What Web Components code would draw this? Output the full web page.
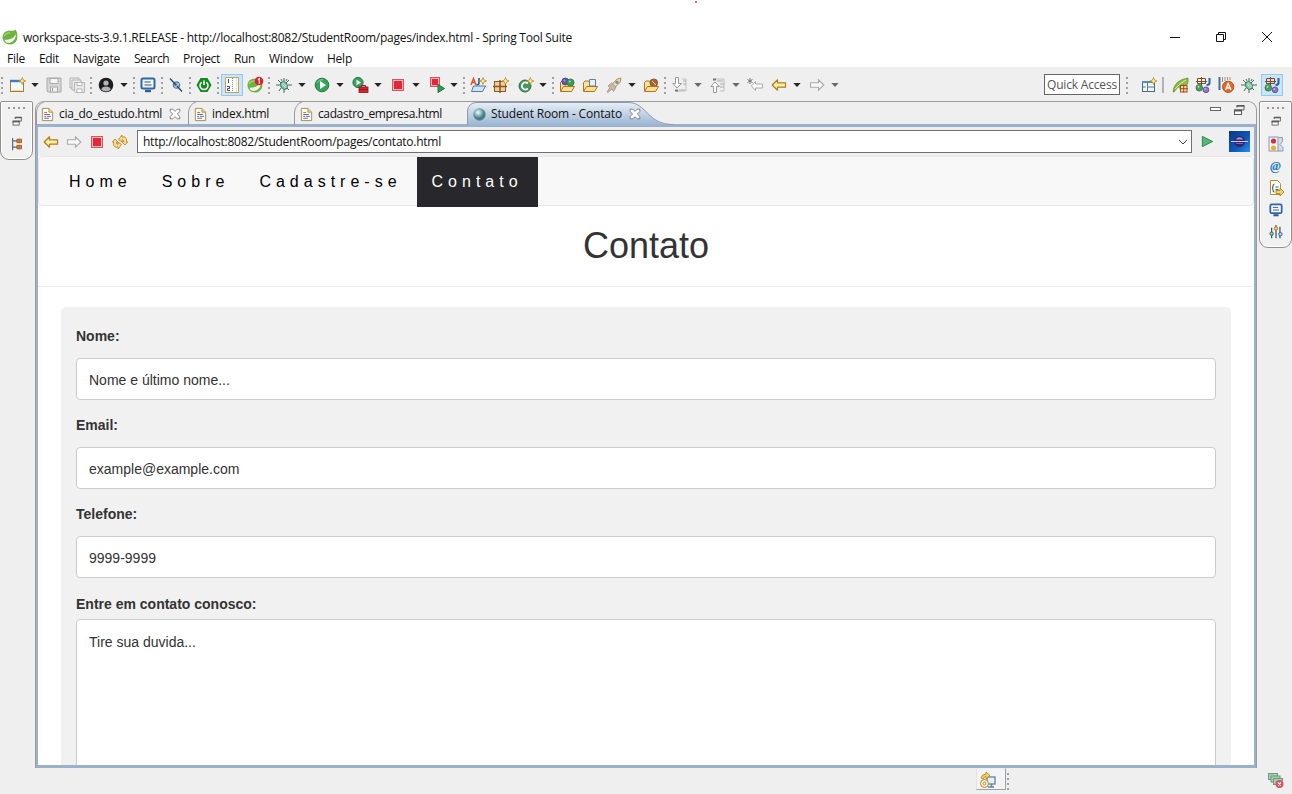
<!DOCTYPE html>
<html lang="pt-BR">
<head>
<meta charset="utf-8">
<title>Spring Tool Suite</title>
<style>
html,body{margin:0;height:100%;overflow:hidden;background:#efefef}
</style>
</head>
<body>
<sts-window></sts-window>
<script>
const define = (name, html, init) => customElements.define(name, class extends HTMLElement {
  connectedCallback() {
    if (this.shadowRoot) return;
    const root = this.attachShadow({mode: 'open'});
    const t = document.createElement('template');
    t.innerHTML = typeof html === 'function' ? html(this) : html;
    root.append(document.importNode(t.content, true));
    if (init) init(this, root);
  }
});

const bug = '<g stroke="#3b6b5c" fill="none"><path d="M2 3l3 3M8 1v4M13 3l-3 3M0 8h4M12 8h4M3 14l2-3M8 12v4M13 13l-3-3M5 2l1 2M11 2l-1 2"/></g><ellipse cx="8" cy="8.500" rx="3.200" ry="4" transform="rotate(-35 8 8.500)" fill="#8ec5a9" stroke="#34745e"/><path d="M6 7l4 4M7 5.500l4 4" stroke="#d8f1e3" stroke-width=".7"/>';
const doc = '<path d="M2.500 1.500h7l4 4v9h-11z" fill="#fffdf2" stroke="#a58d52"/><path d="M9.500 1.500v4h4" fill="#f2d58a" stroke="#a58d52"/><path d="M4.500 6h3M4.500 10h2" stroke="#d04848"/><path d="M4.500 8h6M7.500 10h4M4.500 12h5" stroke="#4a68b0"/>';
const back = (f, s) => `<path d="M1.200 8l5.300-5.200v3h8v4.400h-8v3z" fill="${f}" stroke="${s}" stroke-width="1.200" stroke-linejoin="round"/>`;
const fwd = '<path d="M14.800 8L9.500 2.800v3h-8v4.400h8v3z" fill="#f8f8f8" stroke="#aaa" stroke-width="1.100"/>';
const star = (x, y) => `<path d="M${x} ${y-3.5}l1 2.500 2.500 1-2.500 1-1 2.500-1-2.500-2.500-1 2.500-1z" fill="#ffe9a0" stroke="#bd8a22" stroke-width=".8"/>`;
/* Open folder with an object lying between its back and its front flap. */
const folder = inner => '<path d="M1.500 14V5.500L3 4h3.500l1 1.500h6V9" fill="#fbe0a0" stroke="#ad7624"/>' + inner + '<path d="M1.500 14.500l3-5h11l-3 5z" fill="#ffdf8f" stroke="#ad7624" stroke-linejoin="round"/>';
const monitor = '<rect x="1.500" y="1.500" width="13" height="10" rx="1.500" fill="#f4f9ff" stroke="#2f66a6" stroke-width="2"/><path d="M4.500 5h6M4.500 8h7" stroke="#2f4f80"/><path d="M5 14h6" stroke="#2f5b95" stroke-width="2.400"/>';
const jee = '<g fill="none" stroke="#7c4a22"><path d="M2.500 1.500h8v5h-8zM6.500 0v8M1 4.500h11"/></g><path d="M14.500 1v5q0 2-3 2" fill="none" stroke="#275fa8" stroke-width="2"/><circle cx="4.300" cy="10.800" r="3.300" fill="#49a05c" stroke="#2b6d44" stroke-width=".8"/><circle cx="11" cy="12.800" r="2.900" fill="#8c76c2" stroke="#584590" stroke-width=".8"/><circle cx="3.500" cy="9.800" r="1" fill="#b3e0b5"/><circle cx="10.200" cy="12" r=".8" fill="#d2c7ee"/>';
const spring = '<path d="M13.800 .5C17.500 9 14.500 15.500 8 15.500 3.500 15.500.5 12 .5 8.500.5 4 4 1.500 8 1.800c2.500.2 4.500 0 5.800-1.300z" fill="#6db33f"/><path d="M2.500 10.800c5.500.2 9.300-1.500 11.300-5.800.2 5-3 9-8 8.800-1.500-.2-2.800-1.200-3.300-3z" fill="#fff"/><path d="M2.200 7Q4 3.600 8 3.800" fill="none" stroke="#a5d67d" stroke-width="1.200"/>';
const restore = '<path d="M6 4.500v-2h7v4.500h-3" fill="none" stroke="#5c5c5c"/><path d="M5.500 3h8" stroke="#5c5c5c" stroke-width="1.500"/><rect x="3.500" y="7" width="7" height="4.500" fill="#fff" stroke="#5c5c5c"/><path d="M3 7.500h8" stroke="#5c5c5c" stroke-width="2"/>';
const icons = {
  caret: '<path d="M4.300 6h7.400L8 10z" fill="#252525"/>',
  caretoff: '<path d="M4.300 6h7.400L8 10z" fill="#6a6a6a"/>',
  sep: '<path d="M8 0v2M8 5v2M8 10v2M8 15v2" stroke="#8d8d8d" stroke-width="1.600"/>',
  line: '<path d="M8 0v16" stroke="#777"/>',
  fresh: '<rect x=".5" y="3.500" width="13" height="11" fill="#f1f8fd" stroke="#ab7b2c"/><path d="M0 4h11" stroke="#3f7cbb" stroke-width="2.400"/><path d="M2 13.500h10" stroke="#f4d98d"/>' + star(12.3, 4),
  save: '<path d="M1 1h14v14H2l-1-1z" fill="#d6d6d6" stroke="#aaa"/><rect x="4" y="1.500" width="8" height="5" fill="#f6f6f6" stroke="#aaa"/><rect x="4.500" y="10" width="7" height="5" fill="#f1f1f1" stroke="#aaa"/><path d="M6.500 11v3" stroke="#999"/>',
  saveall: '<g fill="#e9e9e9" stroke="#b5b5b5"><path d="M1 1h9v10H1z"/><path d="M3 3h9v10H3z"/><path d="M5.500 5.500h10v10h-9l-1-1z"/><path d="M8 5.500h5v3H8zM8 12h5v3.500H8z" fill="#fff"/></g>',
  user: '<circle cx="8" cy="8" r="7.300" fill="#1d1d1f"/><circle cx="8" cy="6" r="2.600" fill="#b4b4b8"/><path d="M3.200 12.600q.8-3 4.800-3t4.800 3q-2 2-4.800 2t-4.800-2z" fill="#b4b4b8"/>',
  monitor,
  skip: '<circle cx="8.500" cy="8" r="3.300" fill="#8ab1cf" stroke="#3e6e98"/><path d="M2 1.500l12 13" stroke="#294873" stroke-width="1.400"/><path d="M7 10.500l4-4" stroke="#d6e7f5"/>',
  power: '<path d="M4.500 1h7L15.500 8l-4 7h-7L.5 8z" fill="#148a22"/><path d="M5.600 5.300a4 4 0 1 0 4.800 0M8 3.500V8" fill="none" stroke="#fff" stroke-width="1.500"/>',
  ruler: '<rect x="1.500" y=".5" width="13" height="15" fill="#fffef8" stroke="#c2a362"/><path d="M8.500 1v14" stroke="#888" stroke-dasharray="1 1"/><path d="M4.500 2v4M3 9.500h2.500v2H3.500v2h2.500" fill="none" stroke="#37517b"/><path d="M12.500 1v14" stroke="#efe5c2"/>',
  spring1: spring + '<circle cx="12" cy="4" r="4.300" fill="#e11f2b"/><path d="M11 2.800l1.300-1v5" fill="none" stroke="#fff" stroke-width="1.200"/>',
  spring, bug,
  run: '<circle cx="8" cy="8" r="6.800" fill="#36a35a" stroke="#227943"/><path d="M3 6Q5 2 9 2.600" stroke="#91d2a4" fill="none"/><path d="M6 4l6 4-6 4z" fill="#fff"/>',
  runbox: '<circle cx="6" cy="5.500" r="5.100" fill="#36a35a" stroke="#227943"/><path d="M4.500 2.800l4.500 2.700-4.500 2.700z" fill="#fff"/><rect x="7" y="10" width="9" height="5.500" fill="#d5242c" stroke="#86191c" stroke-width=".8"/><path d="M9.500 10V8.500h4V10M7 12.500h9" fill="none" stroke="#941a1e"/>',
  stop: '<rect x="2.500" y="2.500" width="11" height="11" fill="#f6b6b6" stroke="#ce5961"/><rect x="4" y="4" width="8" height="8" fill="#e5253a"/>',
  stoprun: '<rect x="1.500" y=".5" width="9" height="9" fill="#f3abab" stroke="#ce5961"/><rect x="3" y="2" width="6" height="6" fill="#e5253a"/><path d="M9 7.500l6.500 4-6.500 4z" fill="#2d9c5a" stroke="#1e7441"/>',
  aj: '<path d="M1 8L3.500 1.500 6 8M2 5.500h3" fill="none" stroke="#db5225" stroke-width="1.400"/><path d="M9 1v5q0 2-2.500 1.500" fill="none" stroke="#2b5799" stroke-width="1.600"/>' + star(13, 4) + '<path d="M1.500 14.500l2-5.500h12l-3 5.500z" fill="#cee4f5" stroke="#507ba8"/>',
  grid: '<rect x="1.500" y="4.500" width="11" height="10" fill="#efcf9e" stroke="#8b5824"/><path d="M7 3v13M0 9.500h14" stroke="#8b5824" stroke-width="1.500"/>' + star(12.5, 4),
  cnew: '<circle cx="7" cy="9" r="6" fill="#43985b" stroke="#297444"/><path d="M9.800 6.500a3.500 3.500 0 1 0 0 5" fill="none" stroke="#fff" stroke-width="1.800"/>' + star(12.3, 4),
  folderballs: folder('<circle cx="6.300" cy="4.500" r="3.500" fill="#5b58a8" stroke="#3c3a82" stroke-width=".7"/><circle cx="11.500" cy="5.500" r="3.600" fill="#3f9b5b" stroke="#287243" stroke-width=".7"/><circle cx="5.500" cy="3.500" r="1" fill="#a5a2dc"/><circle cx="10.700" cy="4.500" r="1" fill="#a2dab0"/>'),
  folderdoc: folder('<path d="M7.500 9V2.500h6V9z" fill="#e7f0fa" stroke="#5f80a8"/>'),
  rocket: '<path d="M5.500 8L11 2l4-1-.8 4L8.500 11z" fill="#f9dfa4" stroke="#b08e55"/><path d="M2 9l3.500-3L10 10l-2.500 4.500L6 12l-4 3.500L1 15l3-4.500z" fill="#cbb7a8" stroke="#9a8679" stroke-width=".7"/><circle cx="11" cy="5.200" r="1.700" fill="#6b92c2"/>',
  folderbrush: folder('<circle cx="10.800" cy="5.800" r="3.900" fill="#a96538" stroke="#754320" stroke-width=".7"/><path d="M9 4l4 4" stroke="#eed199"/>'),
  downdoc: '<path d="M10 2h4v12H4" fill="none" stroke="#c0c0c0"/><path d="M11 4h3M11 7h3M7 13h6" stroke="#aaa"/><path d="M3.500.5h3v6h3L5 11 .8 6.500h2.700z" fill="#fff" stroke="#999"/><path d="M3 13.500h3" stroke="#777" stroke-width="2"/>',
  updoc: '<path d="M5 2h9v12h-4" fill="none" stroke="#c0c0c0"/><path d="M7 4h6M10 7h4M10 10h4" stroke="#aaa"/><path d="M3.500 15.500h3v-6h3L5 5 .8 9.500h2.700z" fill="#fff" stroke="#999"/><path d="M3 2.500h3" stroke="#777" stroke-width="2"/>',
  backstar: '<path d="M4.500 9l4-4.500v2.500h7v4h-7v2.500z" fill="#fff" stroke="#aaa"/><path d="M3 1v6M.5 2.500l5 3M5.500 2.500l-5 3" stroke="#777"/>',
  back: back('#fff0a8', '#b27b18'), fwd,
  persp: '<rect x="1.500" y="4.500" width="12" height="10" fill="#e9f4fb" stroke="#3f6f8b"/><path d="M1 5h13" stroke="#5390ba" stroke-width="2"/><path d="M6.500 5v10M6.500 10h7M1.500 10h3" stroke="#5f7d70"/>' + star(12.5, 4),
  leaf: '<path d="M0 15Q1 3 15 1q1 7-4 9-3 1-6 0l-4 5z" fill="#8fbc42" stroke="#5f8526" stroke-width=".7"/><path d="M2 12Q7 6 13 3" stroke="#dcefa9" fill="none"/><rect x="7.500" y="8.500" width="6.500" height="6.500" fill="#f6d99e" stroke="#9b4f1d"/><path d="M10.700 7.500v8M6.500 11.700h8.500" stroke="#9b4f1d"/>',
  jee,
  aop: '<path d="M1.500 0v13" stroke="#446e98" stroke-width="2"/><path d="M4.500 0v5M7 0v4M9.500 0v3M12 0v3" stroke="#aa8c84"/><circle cx="10.200" cy="9.800" r="5.600" fill="#e36b25" stroke="#b64a15"/><path d="M7.500 13l2.700-6.500L13 13M8.500 11h3.500" fill="none" stroke="#fff" stroke-width="1.300"/>',
  doc, restore,
  globe: '<defs><radialGradient id="g" cx=".38" cy=".32"><stop stop-color="#f6fafa"/><stop offset=".45" stop-color="#a5c6cb"/><stop offset="1" stop-color="#437e84"/></radialGradient></defs><circle cx="8" cy="8" r="6.300" fill="url(#g)" stroke="#6a93a5" stroke-width=".6"/>',
  close: '<path d="M2.500 2.500h3L8 5l2.500-2.500h3v2.700L10.700 8l2.800 2.800v2.700h-3L8 11l-2.500 2.500h-3v-2.700L5.300 8 2.500 5.200z" fill="#fff" stroke="#6b6b6b" stroke-width=".9"/>',
  refresh: '<g fill="#fbdc8c" stroke="#bd852a" stroke-width=".9" stroke-linejoin="round"><path d="M6.500 5.500L10 1v2q4.500-1 4.500 3.500v1.500h1.200L13 11l-3-3h1.500V7q0-1.500-1.500-1.200V8z"/><path d="M9.500 10.500L6 15v-2q-4.500 1-4.500-3.500V8H.3L3 5l3 3H4.500v1q0 1.500 1.500 1.200V8z"/></g>',
  play: '<path d="M2.500 2.500l11 5.500-11 5.500z" fill="#55b776" stroke="#2d864c" stroke-linejoin="round"/>',
  hier: '<path d="M3 1v14M3 4.500h5M3 11.500h5" fill="none" stroke="#55657a" stroke-width="1.300"/><g fill="#efbf80" stroke="#a55518"><rect x="8" y="2.500" width="5" height="4"/><rect x="8" y="9.500" width="5" height="4"/><path d="M10.500 2v5M10.500 9v5M7.500 4.500h6M7.500 11.500h6"/></g>',
  outline: '<path d="M10.500 1.500h4v4l-2.500 3 3 3v3.500h-5" fill="#d3dde9" stroke="#8a9ab8"/><rect x="1" y="1" width="9" height="14" fill="#eef4fb" stroke="#8298be"/><circle cx="5.500" cy="5" r="2.600" fill="#d63038"/><circle cx="5.500" cy="12" r="2.600" fill="#ecb027"/>',
  snip: '<path d="M2.500.5h7l3 3v11h-10z" fill="#fffdf0" stroke="#b58d36"/><path d="M6.500 4Q5 4 5 6T4 8q1 0 1 2t1.500 2M7.500 7h3M7.500 9.500h3" stroke="#35609b" fill="none" stroke-width="1.200"/><path d="M8 10.500h4V8l4 4-4 4v-2.500H8z" fill="#f8cf65" stroke="#a87a20" stroke-width=".8"/>',
  sliders: '<path d="M3 3v12M8 0v15M12.500 2v13" stroke="#34507a" stroke-width="1.400"/><circle cx="3" cy="10" r="2" fill="#8cc78f" stroke="#2b6d44"/><circle cx="8" cy="4" r="2" fill="#f6d265" stroke="#9b7420"/><circle cx="13" cy="10.500" r="2" fill="#b5d4f1" stroke="#34507a"/>',
  sync: '<rect x="7" y="5" width="8" height="7" fill="#e6f2fb" stroke="#5d83a8" stroke-width="1.300"/><path d="M8 15h6M11.500 12v3" stroke="#5d83a8" stroke-width="1.500"/><circle cx="4.500" cy="11.500" r="4" fill="#faecc2" stroke="#b28b42"/><circle cx="4.500" cy="11.500" r="1.300" fill="#fff" stroke="#b28b42"/><path d="M1 6q1-4 5-4V0l4 3.500L6 7V4.500Q4 4.500 3.500 7z" fill="#f8ce55" stroke="#a9812e" stroke-width=".8"/>',
  stack: '<g fill="#a9cbb3" stroke="#6c9a7d"><rect x=".5" y="1.500" width="9" height="6"/><rect x="3" y="4" width="9" height="6"/><rect x="5.500" y="6.500" width="9" height="6"/></g><circle cx="11.500" cy="12" r="4" fill="#d9555a"/><path d="M10 10.500l3 3m0-3l-3 3" stroke="#fff" stroke-width="1.200"/>',
};
define('sts-icon', el => `<style>:host{display:block;flex:none;width:16px;height:16px}svg{display:block;width:100%;height:100%;overflow:visible}</style><svg viewBox="0 0 16 16">${icons[el.getAttribute('name')]}</svg>`);

/* One line of UI text spread over a given advance width. */
define('ui-text', `<style>:host{display:block;white-space:nowrap;flex:none;font:12px/16px "Open Sans","Noto Sans",sans-serif;color:#111}span{display:inline-block}</style><span><slot></slot></span>`, (el, root) => {
  const w = +el.getAttribute('w'), s = root.querySelector('span');
  el.style.width = w + 'px';
  s.style.letterSpacing = (w - s.getBoundingClientRect().width) / el.textContent.length + 'px';
});

/* Row of tools; each entry is [icon, centre x, highlighted]. */
const tools = list => {
  let end = 0;
  return list.map(([n, c, hot]) => {
    c = Math.floor(c);
    const w = hot ? 22 : 16, m = c - w / 2 - end;
    end = c + w / 2;
    return `<span class="${hot ? 'hot' : ''}" style="margin-left:${m}px"><sts-icon name="${n}"></sts-icon></span>`;
  }).join('');
};
define('sts-toolbar', `<style>
:host{display:flex;height:34px;align-items:center;background:#efefef;padding-top:1px;box-sizing:border-box}
.row{display:flex;align-items:center;height:22px}
.row span{flex:none}
.hot{width:20px;height:20px;border:1px solid #90c8f6;background:#cce4f7;display:flex;align-items:center;justify-content:center}
.quick{box-sizing:border-box;width:76px;height:21px;border:1px solid #666;background:#fff;padding:2px 2px}
.quick ui-text{color:#555}
.left{width:1044px}
</style>
<div class="row left">${tools([['sep',2.500],['fresh',18],['caret',35],['save',54.500],['saveall',77.500],['sep',91],['user',106],['caret',124],['sep',134],['monitor',148.500],['sep',162],['skip',176],['sep',190],['power',204],['sep',218],['ruler',232,1],['spring1',255.500],['sep',269],['bug',284.500],['caret',302.500],['run',322],['caret',340.500],['runbox',360],['caret',378.500],['stop',398.500],['caret',416.500],['stoprun',437],['caret',454.500],['sep',464],['aj',478],['grid',501.500],['cnew',526],['caret',543.500],['sep',553],['folderballs',567],['folderdoc',590],['rocket',614],['caret',632.500],['folderbrush',651.500],['sep',665],['downdoc',680],['caretoff',698.500],['updoc',718],['caretoff',736.500],['backstar',755],['back',779],['caret',797.500],['fwd',817],['caretoff',835.500]])}</div>
<div class="quick"><ui-text w="70">Quick Access</ui-text></div>
<div class="row">${tools([['sep',7],['persp',29],['line',43.500],['leaf',61],['jee',83],['aop',106],['bug',129],['jee',152.500,1]])}</div>`);

define('sts-header', `<style>
:host{display:block;height:67px;background:#fff;position:relative}
.title{display:flex;align-items:center;height:20px;padding:28px 19px 0 2px}
.title ui-text{margin-left:5px}
.title sts-icon{margin-top:-2px}
.ctl{margin-left:auto;display:flex;gap:34px;margin-top:-3px}
.ctl svg{width:12px;height:12px;fill:none;stroke:#111}
.menu{display:flex;padding:3px 0 0 7px}
.dot{position:absolute;left:695px;top:1px;width:2px;height:2px;background:#f06070}
</style><i class="dot"></i>
<div class="title"><sts-icon name="spring"></sts-icon><ui-text w="549">workspace-sts-3.9.1.RELEASE - http://localhost:8082/StudentRoom/pages/index.html - Spring Tool Suite</ui-text>
<div class="ctl"><svg><path d="M1 6.500h10"/></svg><svg><path d="M1.500 3.500h7v7h-7zM3.500 3V1.500h7v7H9"/></svg><svg><path d="M1 1l10 10M11 1L1 11"/></svg></div></div>
<div class="menu"><ui-text w="18">File</ui-text><ui-text w="20" style="margin-left:14px">Edit</ui-text><ui-text w="47" style="margin-left:14px">Navigate</ui-text><ui-text w="35" style="margin-left:14px">Search</ui-text><ui-text w="37" style="margin-left:14px">Project</ui-text><ui-text w="21" style="margin-left:14px">Run</ui-text><ui-text w="44" style="margin-left:14px">Window</ui-text><ui-text w="25" style="margin-left:14px">Help</ui-text></div>`);

define('trim-bar', `<style>:host{display:flex;flex-direction:column;align-items:center;box-sizing:border-box;width:33px;border:1px solid #8f8f8f;border-radius:2px 2px 9px 9px;background:#f1f1f1;box-shadow:inset 0 0 0 1px #fff;padding-top:5px;flex:none}
.grip{width:17px;height:2px;margin-bottom:6px;background:repeating-linear-gradient(90deg,#999 0 2px,transparent 2px 5px)}</style><div class="grip"></div><slot></slot>`);

define('editor-tab', el => {
  const on = el.hasAttribute('active');
  return `<style>:host{display:flex;align-items:center;box-sizing:border-box;height:23px;padding:1px 0 0 4px;position:relative;flex:none}
.bg{position:absolute;left:0;top:0;width:206px;height:24px;overflow:visible}
sts-icon{position:relative}.t{position:relative;display:flex;align-items:center}
sts-icon{width:15px;height:15px;margin-right:4px}</style>
${on ? '<svg class="bg"><defs><linearGradient id="b" x2="0" y2="1"><stop stop-color="#eaf0f7"/><stop offset="1" stop-color="#99b4d2"/></linearGradient></defs><path d="M0 24V9Q1 0 10 0H161C180 0 180 23 206 23V24z" fill="url(#b)"/><path d="M.5 23V9Q1.500 .5 10 .5H161C180 .5 180 22.500 206 22.500" fill="none" stroke="#8c9aac"/></svg>'
     : '<svg class="bg" style="width:12px"><path d="M.5 23V10Q1.500 2 8 0" fill="none" stroke="#999"/></svg>'}
<sts-icon name="${el.getAttribute('icon')}"></sts-icon><div class="t"><slot></slot></div>`;
});

define('browser-bar', `<style>:host{display:flex;height:29px;align-items:center;background:#efefef;padding-left:5px;box-sizing:border-box}
.url{margin-left:8px;width:1055px;height:23px;box-sizing:border-box;border:1px solid #707070;background:#fff;display:flex;align-items:center;padding:0 2px 0 5px}
.url svg{width:11px;height:8px;margin-left:auto;fill:none;stroke:#444}
sts-icon{margin-right:7px}.go{margin:0 0 0 8px;width:15px;height:15px}
.ecl{width:21px;height:21px;margin-left:14px}</style>
<sts-icon name="back"></sts-icon><sts-icon name="fwd"></sts-icon><sts-icon name="stop"></sts-icon><sts-icon name="refresh" style="margin-right:1px"></sts-icon>
<div class="url"><ui-text w="298">http://localhost:8082/StudentRoom/pages/contato.html</ui-text><svg><path d="M1 2l4 4 4-4"/></svg></div>
<sts-icon class="go" name="play"></sts-icon>
<svg class="ecl" viewBox="0 0 21 21"><defs><linearGradient id="e" x2="1" y2="1"><stop stop-color="#083888"/><stop offset=".6" stop-color="#1159b8"/><stop offset="1" stop-color="#2693ed"/></linearGradient></defs><path d="M0 0h21v21H0z" fill="url(#e)"/><circle cx="10.500" cy="10.500" r="5.500" fill="#33256e"/><path d="M6.500 8.500Q10.500 4 14.500 8.500z" fill="#a49bd8"/><path d="M2 10.500h17" stroke="#c7c9f4"/><path d="M7 12.500h7" stroke="#6f66b0"/></svg>`);

define('nav-item', `<style>:host{display:block;padding:15px;height:20px;font:16px/20px "Liberation Sans",Arial,sans-serif;letter-spacing:5px;color:#000}:host([active]){background:#28272c;color:#fff}</style><slot></slot>`);
define('form-field', el => `<style>:host{display:block}label{display:block;font-weight:700;line-height:20px;height:20px}
div{box-sizing:border-box;height:42px;border:1px solid #ccc;border-radius:4px;background:#fff;padding:11px 12px;line-height:20px;margin:12px 0 15px}
:host([area]) div{height:200px;margin-top:5px;padding-top:12px}</style><label>${el.getAttribute('label')}</label><div><slot></slot></div>`);
define('contact-page', `<style>:host{display:block;background:#fff;font:14px/20px "Liberation Sans",Arial,sans-serif;color:#333;overflow:hidden;flex:1;min-height:0}
nav{display:flex;box-sizing:border-box;height:50px;border:1px solid #e7e7e7;border-radius:4px;background:#f8f8f8;padding-left:15px}
h1{font-weight:500;font-size:36px;line-height:40px;margin:20px 0 20px;text-align:center}
hr{border:0;border-top:1px solid #eee;margin:0 0 20px}
form{margin:0 23px;background:#f1f1f1;border-radius:5px;padding:19px 15px}</style>
<nav><nav-item>Home</nav-item><nav-item>Sobre</nav-item><nav-item>Cadastre-se</nav-item><nav-item active>Contato</nav-item></nav>
<h1>Contato</h1><hr>
<form><form-field label="Nome:">Nome e último nome...</form-field><form-field label="Email:">example@example.com</form-field><form-field label="Telefone:">9999-9999</form-field><form-field area label="Entre em contato conosco:" style="padding-top:1px">Tire sua duvida...</form-field></form>`);

define('editor-area', `<style>:host{display:flex;flex-direction:column;box-sizing:border-box;width:1222px;height:667px;border:1px solid #9b9b9b;border-bottom:0;border-radius:9px 9px 0 0;overflow:hidden;background:#efefef;flex:none}
.tabs{display:flex;height:22px;flex:none}
.win{margin-left:auto;display:flex;align-items:flex-start;gap:10px;padding:0 9px 0 0}
.min{width:9px;height:2px;border:1px solid #666;background:#fff;margin-top:5px}
.frame{box-sizing:border-box;border:solid #9bb0ca;border-width:3px 2px 3px 2px;flex:1;display:flex;flex-direction:column;min-height:0}</style>
<div class="tabs">
<editor-tab icon="doc" style="width:152px"><ui-text w="103">cia_do_estudo.html</ui-text><sts-icon name="close" style="width:14px;height:14px;margin-left:6px"></sts-icon></editor-tab>
<editor-tab icon="doc" style="width:106px;padding-left:5px"><ui-text w="57">index.html</ui-text></editor-tab>
<editor-tab icon="doc" style="width:173px;padding-left:5px"><ui-text w="124">cadastro_empresa.html</ui-text></editor-tab>
<editor-tab icon="globe" active style="padding-left:5px"><ui-text w="131">Student Room - Contato</ui-text><sts-icon name="close" style="width:14px;height:14px;margin-left:6px"></sts-icon></editor-tab>
<div class="win"><i class="min"></i><sts-icon name="restore" style="margin-top:1px"></sts-icon></div></div>
<div class="frame"><browser-bar></browser-bar><contact-page></contact-page></div>`);

define('sts-window', `<style>:host{display:flex;flex-direction:column;width:1292px;height:794px;overflow:hidden;background:#efefef}
.main{display:flex;align-items:flex-start;height:667px;flex:none}
.main sts-icon{margin-bottom:6px}
.at{font:italic bold 13px/16px "Liberation Serif",serif;color:#267cbd;height:16px;margin-bottom:6px}
.status{display:flex;align-items:flex-start;height:26px}
.btn{box-sizing:border-box;width:30px;height:22px;margin-left:976px;border:1px solid #a0a0a0;border-top-color:#efefef;border-left-color:#e2e2e2;padding:3px 0 0 3px;background:#f4f4f4}</style>
<sts-header></sts-header><sts-toolbar></sts-toolbar>
<div class="main">
<trim-bar style="height:59px"><sts-icon name="restore" style="width:14px;height:14px"></sts-icon><sts-icon name="hier" style="width:14px;height:14px;margin-top:2px"></sts-icon></trim-bar>
<editor-area style="margin:0 2px"></editor-area>
<trim-bar style="height:147px"><sts-icon name="restore" style="width:14px;height:14px;margin-bottom:7px"></sts-icon><sts-icon name="outline"></sts-icon><div class="at">@</div><sts-icon name="snip"></sts-icon><sts-icon name="monitor" style="width:14px;height:14px;margin-top:1px;margin-bottom:8px"></sts-icon><sts-icon name="sliders" style="width:14px;height:14px"></sts-icon></trim-bar>
</div>
<div class="status"><div class="btn"><sts-icon name="sync"></sts-icon></div><sts-icon name="sep" style="margin:5px 0 0 -6px"></sts-icon><sts-icon name="stack" style="margin:4px 0 0 252px"></sts-icon></div>`);
</script>
</body>
</html>
